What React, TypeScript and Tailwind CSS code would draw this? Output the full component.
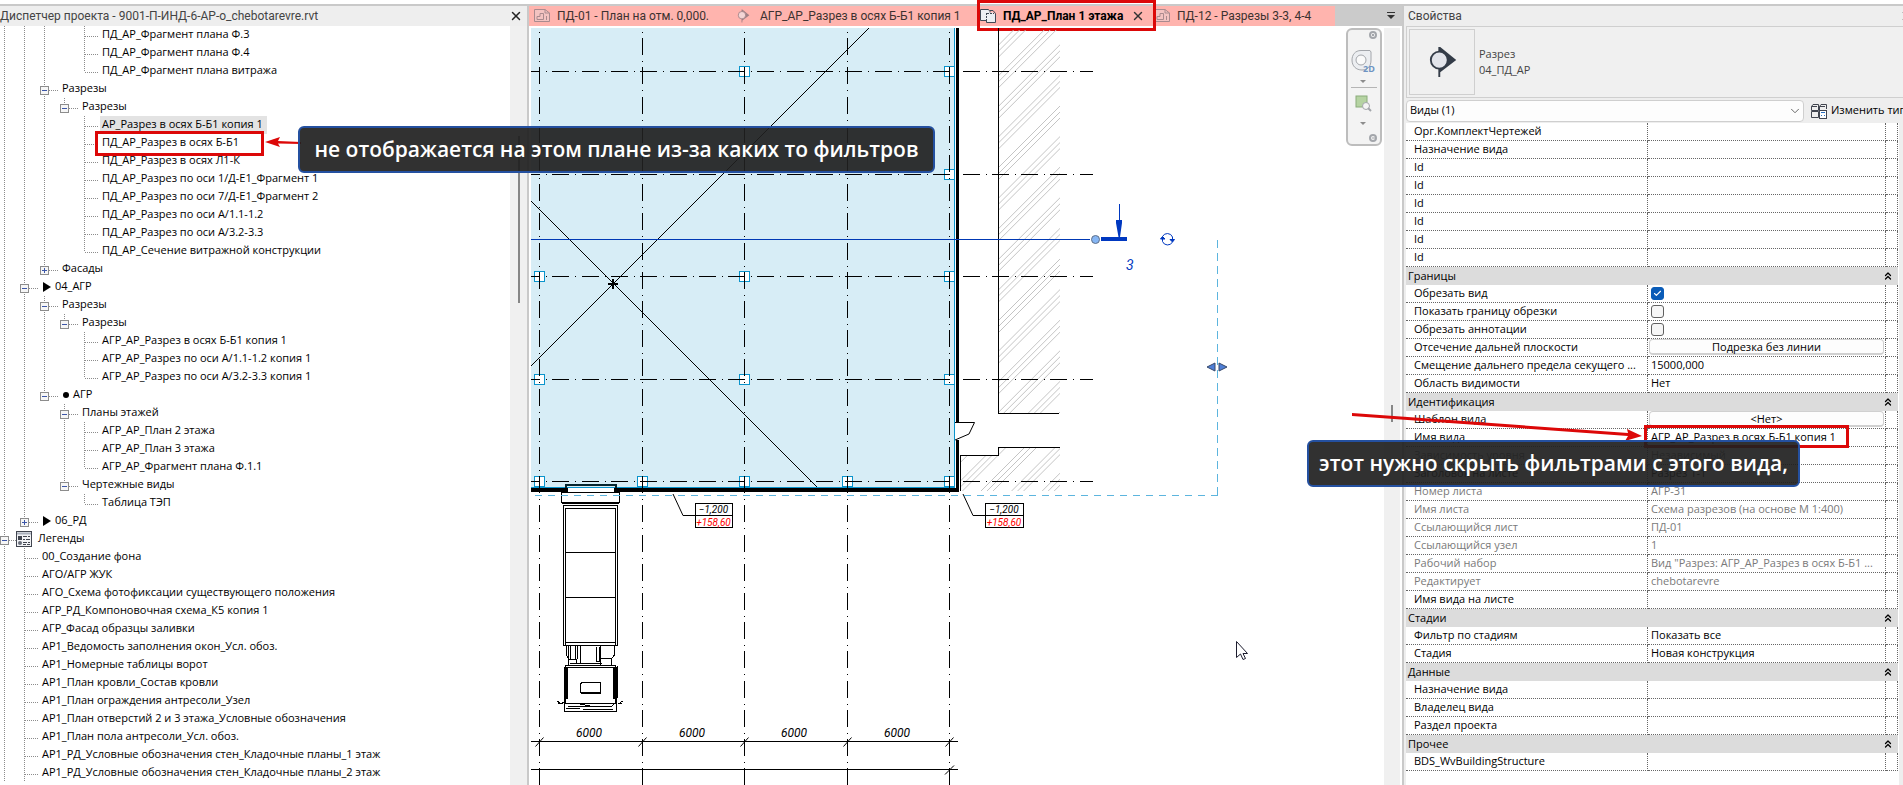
import React from 'react';
import { Check, ChevronDown, ChevronsUp, X } from 'lucide-react';

interface TreeRow {
  // one char per 20px column: | line, t tee, l corner, m/M minus box, P plus box (capital = last child)
  guides: string;
  text: string;
  mark?: 'triangle' | 'dot' | 'legend';
  selected?: boolean;
}

const treeRows: TreeRow[] = [
  { guides: '||| t', text: 'ПД_АР_Фрагмент плана Ф.3' },
  { guides: '||| t', text: 'ПД_АР_Фрагмент плана Ф.4' },
  { guides: '||| l', text: 'ПД_АР_Фрагмент плана витража' },
  { guides: '||m', text: 'Разрезы' },
  { guides: '|||M', text: 'Разрезы' },
  { guides: '||| t', text: 'АР_Разрез в осях Б-Б1 копия 1', selected: true },
  { guides: '||| t', text: 'ПД_АР_Разрез в осях Б-Б1' },
  { guides: '||| t', text: 'ПД_АР_Разрез в осях Л1-К' },
  { guides: '||| t', text: 'ПД_АР_Разрез по оси 1/Д-Е1_Фрагмент 1' },
  { guides: '||| t', text: 'ПД_АР_Разрез по оси 7/Д-Е1_Фрагмент 2' },
  { guides: '||| t', text: 'ПД_АР_Разрез по оси А/1.1-1.2' },
  { guides: '||| t', text: 'ПД_АР_Разрез по оси А/3.2-3.3' },
  { guides: '||| l', text: 'ПД_АР_Сечение витражной конструкции' },
  { guides: '||P', text: 'Фасады' },
  { guides: '|m', text: '04_АГР', mark: 'triangle' },
  { guides: '||m', text: 'Разрезы' },
  { guides: '|||M', text: 'Разрезы' },
  { guides: '||| t', text: 'АГР_АР_Разрез в осях Б-Б1 копия 1' },
  { guides: '||| t', text: 'АГР_АР_Разрез по оси А/1.1-1.2 копия 1' },
  { guides: '||| l', text: 'АГР_АР_Разрез по оси А/3.2-3.3 копия 1' },
  { guides: '||M', text: 'АГР', mark: 'dot' },
  { guides: '|| m', text: 'Планы этажей' },
  { guides: '|| |t', text: 'АГР_АР_План 2 этажа' },
  { guides: '|| |t', text: 'АГР_АР_План 3 этажа' },
  { guides: '|| |l', text: 'АГР_АР_Фрагмент плана Ф.1.1' },
  { guides: '|| M', text: 'Чертежные виды' },
  { guides: '||  l', text: 'Таблица ТЭП' },
  { guides: '|P', text: '06_РД', mark: 'triangle' },
  { guides: 'm', text: 'Легенды', mark: 'legend' },
  { guides: '|t', text: '00_Создание фона' },
  { guides: '|t', text: 'АГО/АГР ЖУК' },
  { guides: '|t', text: 'АГО_Схема фотофиксации существующего положения' },
  { guides: '|t', text: 'АГР_РД_Компоновочная схема_К5 копия 1' },
  { guides: '|t', text: 'АГР_Фасад образцы заливки' },
  { guides: '|t', text: 'АР1_Ведомость заполнения окон_Усл. обоз.' },
  { guides: '|t', text: 'АР1_Номерные таблицы ворот' },
  { guides: '|t', text: 'АР1_План кровли_Состав кровли' },
  { guides: '|t', text: 'АР1_План ограждения антресоли_Узел' },
  { guides: '|t', text: 'АР1_План отверстий 2 и 3 этажа_Условные обозначения' },
  { guides: '|t', text: 'АР1_План пола антресоли_Усл. обоз.' },
  { guides: '|t', text: 'АР1_РД_Условные обозначения стен_Кладочные планы_1 этаж' },
  { guides: '|t', text: 'АР1_РД_Условные обозначения стен_Кладочные планы_2 этаж' },
];

interface Prop {
  name: string;
  value?: string;
  kind?: 'group' | 'check' | 'button';
  checked?: boolean;
  muted?: boolean;
}

const props: Prop[] = [
  { name: 'Орг.КомплектЧертежей' },
  { name: 'Назначение вида' },
  { name: 'Id' },
  { name: 'Id' },
  { name: 'Id' },
  { name: 'Id' },
  { name: 'Id' },
  { name: 'Id' },
  { name: 'Границы', kind: 'group' },
  { name: 'Обрезать вид', kind: 'check', checked: true },
  { name: 'Показать границу обрезки', kind: 'check' },
  { name: 'Обрезать аннотации', kind: 'check' },
  { name: 'Отсечение дальней плоскости', kind: 'button', value: 'Подрезка без линии' },
  { name: 'Смещение дальнего предела секущего ...', value: '15000,000' },
  { name: 'Область видимости', value: 'Нет' },
  { name: 'Идентификация', kind: 'group' },
  { name: 'Шаблон вида', kind: 'button', value: '<Нет>' },
  { name: 'Имя вида', value: 'АГР_АР_Разрез в осях Б-Б1 копия 1' },
  { name: 'Зависимость уровня', value: 'Независимый', muted: true },
  { name: 'Заголовок на листе', value: 'Разрез 1-1' },
  { name: 'Номер листа', value: 'АГР-31', muted: true },
  { name: 'Имя листа', value: 'Схема разрезов (на основе М 1:400)', muted: true },
  { name: 'Ссылающийся лист', value: 'ПД-01', muted: true },
  { name: 'Ссылающийся узел', value: '1', muted: true },
  { name: 'Рабочий набор', value: 'Вид "Разрез: АГР_АР_Разрез в осях Б-Б1 ...', muted: true },
  { name: 'Редактирует', value: 'chebotarevre', muted: true },
  { name: 'Имя вида на листе' },
  { name: 'Стадии', kind: 'group' },
  { name: 'Фильтр по стадиям', value: 'Показать все' },
  { name: 'Стадия', value: 'Новая конструкция' },
  { name: 'Данные', kind: 'group' },
  { name: 'Назначение вида' },
  { name: 'Владелец вида' },
  { name: 'Раздел проекта' },
  { name: 'Прочее', kind: 'group' },
  { name: 'BDS_WvBuildingStructure' },
];

const Guide: React.FC<{ code: string }> = ({ code }) => {
  const box = 'mMP'.includes(code);
  const up = code !== ' ';
  const down = '|tm'.includes(code);
  const side = 'tlmMP'.includes(code);
  return (
    <svg className="h-[18px] w-5 shrink-0" viewBox="0 0 20 18" shapeRendering="crispEdges" aria-hidden="true">
      <g stroke="#8c8c8c" strokeDasharray="1 1">
        {up && <path d="M4.5 0V10" />}
        {down && <path d="M4.5 10V18" />}
        {side && <path d="M5 10.5H19" />}
      </g>
      {box && (
        <>
          <rect x="0.5" y="6.5" width="8" height="8" fill="#f6f6f6" stroke="#8c8c8c" />
          <path d={code === 'P' ? 'M2 10.5H7M4.5 8V13' : 'M2 10.5H7'} stroke="#3c56a8" />
        </>
      )}
    </svg>
  );
};

const LegendIcon = () => (
  <svg className="-ml-1 mr-0.5 h-4 w-4 shrink-0" viewBox="0 0 16 16" aria-hidden="true">
    <rect x="0.5" y="0.5" width="15" height="15" fill="#f2f3f6" stroke="#41454f" />
    <path d="M1 2.5H15" stroke="#aab0bc" strokeWidth="2" />
    <rect x="2" y="5" width="4" height="4" fill="#41454f" />
    <circle cx="4" cy="12" r="2" fill="#6a6f7a" />
    <path d="M7 5.5H11M12 5.5H14M7 8.5H9M10 8.5H14M7 11.5H11M12 11.5H14M7 13.5H10M11 13.5H14" stroke="#41454f" />
  </svg>
);

const SheetIcon = () => (
  <svg className="h-4 w-4 shrink-0" viewBox="0 0 16 16" fill="none" stroke="#a98a8e" aria-hidden="true">
    <path d="M0.5 1.5H11L15.5 5V13.5H0.5Z" fill="#f3c3c1" />
    <path d="M11 1.5V5H15.5M3 11.5V8.5H6V5.5H9.5V11.5H3M12.5 8V12" />
  </svg>
);

const PlanIcon = () => (
  <svg className="h-4 w-4 shrink-0" viewBox="0 0 16 16" fill="#eceef2" stroke="#3f4754" aria-hidden="true">
    <path d="M0.5 1.5H8.5L10 3.5V12.5H0.5Z" />
    <path d="M6.5 4.5H13L15.5 6.5V14.5H6.5Z" stroke="none" />
    <path d="M10 2.5H13L15.5 5.5V14.5H6.5V12" fill="none" />
    <path d="M6.5 5V12M7 5.5H14" strokeDasharray="2 1" />
  </svg>
);

const SectionIcon: React.FC<{ className: string; dark: string; light: string }> = ({ className, dark, light }) => (
  <svg className={className} viewBox="0 0 32 34" aria-hidden="true">
    <path d="M12 1L29 15L12 28V33H10V1Z" fill={dark} />
    <circle cx="11" cy="15" r="9" fill={light} stroke={dark} strokeWidth="2" />
  </svg>
);

const ProjectBrowser = () => (
  <aside className="flex w-[529px] shrink-0 flex-col border-r-2 border-[#c9c9c9]">
    <header className="flex h-5 items-center justify-between overflow-hidden bg-[#eeeeee] pr-1 font-[Roboto,sans-serif] text-[12px] text-[#444]">
      <h2 className="whitespace-nowrap">Диспетчер проекта - 9001-П-ИНД-6-АР-о_chebotarevre.rvt</h2>
      <button type="button" aria-label="Закрыть диспетчер">
        <X className="h-3.5 w-3.5 text-[#222]" strokeWidth={2.5} />
      </button>
    </header>
    <div className="flex flex-1">
      <ul className="flex-1">
        {treeRows.map((row, i) => (
          <li key={i} className="flex h-[18px] items-center whitespace-nowrap leading-4">
            {row.guides.split('').map((code, j) => (
              <Guide key={j} code={code} />
            ))}
            {row.mark === 'legend' && <LegendIcon />}
            {row.mark === 'triangle' && (
              <svg className="ml-[3px] h-3 w-2 shrink-0" viewBox="0 0 8 12" aria-hidden="true">
                <path d="M0 1L8 6L0 11Z" />
              </svg>
            )}
            {row.mark === 'dot' && <span className="ml-[3px] h-1.5 w-1.5 rounded-full bg-black" />}
            <span className={row.selected ? 'bg-[#e3e3e3] pb-0.5 pl-0.5 pr-1' : row.mark ? 'pb-0.5 pl-1' : 'pb-0.5 pl-0.5'}>{row.text}</span>
          </li>
        ))}
      </ul>
      <div className="flex w-[17px] justify-center bg-[#f0f0f0] pt-[110px]">
        <div className="h-[167px] w-0.5 bg-[#868686]" />
      </div>
    </div>
  </aside>
);

const gridX = [539.5, 642.5, 744.5, 847.5, 949.5];
const gridY = [71.5, 174.5, 276.5, 379.5, 481.5];
const columns = [
  [744.5, 71.5], [949.5, 71.5], [949.5, 174.5],
  [539.5, 276.5], [744.5, 276.5], [949.5, 276.5],
  [539.5, 379.5], [744.5, 379.5], [949.5, 379.5],
  [539.5, 481.5], [642.5, 481.5], [744.5, 481.5], [847.5, 481.5], [949.5, 481.5],
];
const hatch = Array.from({ length: 20 }, (_, k) => [0, 6, 12].map((d) => 1013 + k * 30.6 + d)).flat();

const LevelMark: React.FC<{ x: number; width: number }> = ({ x, width }) => (
  <g>
    <path d={`M${x - 22} 494L${x - 12} 515.5H${x}`} stroke="#000" fill="none" />
    <rect x={x + 0.5} y="503.5" width={width} height="24" fill="#fff" stroke="#000" shapeRendering="crispEdges" />
    <path d={`M${x} 515.5h${width}`} stroke="#000" shapeRendering="crispEdges" />
    <text x={x + width / 2} y="513" textAnchor="middle">−1,200</text>
    <text x={x + width / 2} y="526" textAnchor="middle" fill="#f00">+158,60</text>
  </g>
);

const Truck = () => (
  <g fill="none" stroke="#000" shapeRendering="crispEdges">
    <rect x="561.5" y="492.5" width="58" height="10" fill="#fff" />
    <path d="M562 503.5H619" />
    <path d="M563.5 645V505.5H617.5V645Z" fill="#fff" />
    <path d="M565.5 645V508.5H615.5V645M565 552.5H616M565 597.5H616M565 642.5H616" />
    <path d="M566.5 646V655L569 659M614.5 646V655L612 658M568.5 646V665M570.5 646V659M575.5 646V659M577.5 646V659M580.5 646V664M596.5 647V661M599.5 647V661M600.5 646V665M596 661.5H600M601 658.5H611.5V665M569 659.5H576V663.5H570M568 665.5H612M577 663.5H602" />
    <rect x="565.5" y="665.5" width="50" height="38" />
    <path d="M567 667.5H615" />
    <path d="M565.5 667V699M615 667V699" strokeWidth="4" />
    <path d="M617.5 666V698" />
    <path d="M580.5 693V684L582 682.5H600.5V692" />
    <path d="M581 693H601" strokeWidth="2" />
    <path d="M568 703.5H577L590 706H612L614 703.5M564.5 698V711.5H616.5V698M566 708.5H580M568 706.5H612M583 709.5H613" />
    <path d="M557 701L561 704L564 702M623 701L618 704M557.5 703H563M618 703.5H622" />
  </g>
);

const FloorPlan = () => (
  <svg className="min-h-[700px] w-full flex-1" role="img" aria-label="План 1 этажа">
    <defs>
      <clipPath id="hatchArea">
        <path d="M999 30H1060V413H999ZM961 455H999V448H1060V491H961Z" />
      </clipPath>
    </defs>
    <g transform="translate(-531 -28)" fontFamily="Roboto, sans-serif" fontStyle="italic" fontSize="10">
      <rect x="531" y="28" width="424" height="460" fill="#d7edf6" />
      <g clipPath="url(#hatchArea)" stroke="#c4c4c4">
        {hatch.map((c) => (
          <path key={c} d={`M${c - 600} 600L${c} 0`} />
        ))}
      </g>

      {/* Floor diagonals */}
      <path d="M869 28L531 366M531 201L817 487" stroke="#000" />

      {/* Columns */}
      <g fill="#fff" stroke="#0a94cc" shapeRendering="crispEdges">
        {columns.map(([x, y]) => (
          <rect key={`${x}-${y}`} x={x - 5} y={y - 5} width="10" height="10" />
        ))}
      </g>

      {/* Walls */}
      <g shapeRendering="crispEdges">
        <path d="M954.5 28V488M531 487.5H955" stroke="#0a94cc" />
        <path d="M956 28H959V422H956ZM956 440H959V492H956ZM531 488H568V492H531ZM614 488H959V492H614Z" />
        <path d="M568 488H614V492H568Z" fill="#fff" />
        <path d="M566 488V485H616V488" fill="none" stroke="#06262e" strokeWidth="2" />
        <path d="M998.5 28V413.5H1059M960.5 491V455.5H998.5V447.5H1060" fill="none" stroke="#000" />
      </g>
      <path d="M955 422.5H974.5L969 434L955 440" fill="#fff" stroke="#000" />

      {/* Grid axes */}
      <g stroke="#000" shapeRendering="crispEdges">
        {gridX.map((x) => (
          <path key={x} d={`M${x} 28V785`} strokeDasharray="17 6 1 5.2" strokeDashoffset="19" />
        ))}
        {gridY.map((y) => (
          <path key={y} d={`M531 ${y}H1093`} strokeDasharray="17 6 1 5.3" strokeDashoffset="8" />
        ))}
        <path d="M531 741.5H958M531 769.5H958" />
      </g>
      <path d="M608 284H618M613 279V289" stroke="#000" strokeWidth="2" />

      {/* Dimensions */}
      <g stroke="#000">
        {gridX.map((x) => (
          <path key={x} d={`M${x - 4} 746.5L${x + 4} 737.5`} />
        ))}
        <path d="M945 774.5L954 765.5" />
      </g>
      <g textAnchor="middle" fontSize="12">
        <text x="589" y="737">6000</text>
        <text x="692" y="737">6000</text>
        <text x="794" y="737">6000</text>
        <text x="897" y="737">6000</text>
      </g>

      <Truck />
      <LevelMark x={695} width={37} />
      <LevelMark x={985} width={38} />

      {/* Section crop region */}
      <path d="M1217.5 240V495.5" stroke="#5cb5de" strokeDasharray="8 5" shapeRendering="crispEdges" />
      <path d="M1217.5 495.5H531" stroke="#5cb5de" strokeDasharray="7 6" shapeRendering="crispEdges" />
      <path d="M1215 363L1207 367L1215 371ZM1219 363L1227 367L1219 371Z" fill="#4f7fd6" stroke="#384a6b" />

      {/* Section mark */}
      <g fill="#0038c0">
        <path d="M531 239.5H1090" stroke="#0038b4" shapeRendering="crispEdges" />
        <path d="M1101 237H1127V241H1101Z" />
        <path d="M1119 204H1120V220H1122V223L1120 237H1118.5L1116 223V220H1119Z" />
        <circle cx="1095.5" cy="239.5" r="4" fill="#86b6f4" stroke="#5f6f88" />
        <text x="1126" y="270" fontSize="14">3</text>
      </g>
      <g fill="none" stroke="#0038c0">
        <path d="M1162.5 236.5A5.5 5.5 0 0 1 1172.5 237V241M1172.5 242A5.5 5.5 0 0 1 1162.5 241.5V238" />
        <path d="M1160.5 239L1162.5 236.5L1165 239ZM1170 239.5L1172.5 242L1174.5 239.5Z" fill="#0038c0" />
      </g>

      <path d="M1236.5 641.5V657.5L1240.5 654L1243 659.5L1245.5 658.5L1243 653.5H1247.5Z" fill="#fff" stroke="#1c1c2e" />
    </g>
  </svg>
);

const NavigationBar = () => (
  <div className="absolute right-0.5 top-0 flex h-[118px] w-9 flex-col items-center rounded-md border-2 border-[#bdbdbd] bg-[#f3f3f3]">
    <svg className="h-full w-full" viewBox="0 0 32 114" fill="none" stroke="#a3a6ab" aria-hidden="true">
      <circle cx="25" cy="5" r="3" strokeWidth="2" />
      <path d="M24 4L26 6M26 4L24 6" />
      <path d="M22 20.5H13C7 20.5 4 25 4 30C4 36 8 40 14 40C20 40 23 36 23 30V22Z" fill="#eceef1" />
      <circle cx="13" cy="30" r="5" fill="#fafafa" />
      <text x="15" y="42" fontSize="9" fontWeight="700" fill="#6f94c2" stroke="none">2D</text>
      <path d="M12 50H18L15 53Z" fill="#8c8c8c" stroke="none" />
      <path d="M3 57.5H29" stroke="#b5b5b5" />
      <rect x="8" y="66" width="11" height="11" fill="#b5d3a2" stroke="#8aab7b" />
      <circle cx="18" cy="76" r="3.5" fill="#f5f5f5" />
      <path d="M20 78L23 81" strokeWidth="2" />
      <path d="M12 92H18L15 95Z" fill="#8c8c8c" stroke="none" />
      <circle cx="25" cy="108" r="3" strokeWidth="2" />
      <path d="M24 108H27" />
    </svg>
  </div>
);

const Workspace = () => (
  <main className="flex min-w-0 flex-1 flex-col">
    <nav className="flex h-5 items-center bg-[#cbcbcb] font-[Roboto,sans-serif] text-[12px] text-[#3c3230]">
      <div className="flex h-5 w-full max-w-[806px] items-center whitespace-nowrap bg-[#ffb4ae]">
        <button type="button" className="flex h-5 w-[203px] shrink-0 items-center gap-[7px] pl-[5px]">
          <SheetIcon />
          ПД-01 - План на отм. 0,000.
        </button>
        <button type="button" className="flex h-5 w-[245px] shrink-0 items-center gap-[9px] pl-[5px]">
          <SectionIcon className="h-3.5 w-3.5 shrink-0" dark="#a07f84" light="#f3d5d5" />
          АГР_АР_Разрез в осях Б-Б1 копия 1
        </button>
        <div className="relative flex h-5 w-[177px] shrink-0 items-center justify-between pl-[3px] pr-[9px] text-black">
          <button type="button" className="flex items-center gap-[7px] font-bold">
            <PlanIcon />
            ПД_АР_План 1 этажа
          </button>
          <button type="button" aria-label="Закрыть вид">
            <X className="h-3.5 w-3.5 text-[#333]" strokeWidth={2.5} />
          </button>
          <div className="pointer-events-none absolute -bottom-[5px] -top-1.5 left-0 -right-0.5 border-[3px] border-[#dc0808]" />
        </div>
        <button type="button" className="flex h-5 items-center gap-[7px]">
          <SheetIcon />
          ПД-12 - Разрезы 3-3, 4-4
        </button>
      </div>
      <button type="button" className="ml-auto pr-1.5" aria-label="Список видов">
        <svg className="h-2 w-2.5" viewBox="0 0 10 8">
          <path d="M1 0H9V1H1ZM1 3H9L5 7Z" fill="#333" />
        </svg>
      </button>
    </nav>
    <div className="flex flex-1 px-0.5 pt-0.5">
      <div className="relative flex min-w-0 flex-1 flex-col">
        <FloorPlan />
        <NavigationBar />
      </div>
      <div className="flex w-4 justify-center bg-[#f0f0f0] pt-[377px]">
        <div className="h-[17px] w-0.5 bg-[#868686]" />
      </div>
    </div>
  </main>
);

const PropertyValue: React.FC<{ prop: Prop; id: string }> = ({ prop, id }) => {
  if (prop.kind === 'check') {
    return (
      <span className="relative mt-0.5 block h-[13px] w-[13px]">
        <input
          id={id}
          type="checkbox"
          defaultChecked={prop.checked}
          className="block h-[13px] w-[13px] appearance-none rounded-[3px] border border-[#606060] bg-[#f6f6f6] checked:border-[#0a5cb8] checked:bg-[#0a5cb8]"
        />
        {prop.checked && <Check className="pointer-events-none absolute left-0.5 top-0.5 h-[9px] w-[9px] text-white" strokeWidth={3} />}
      </span>
    );
  }
  if (prop.kind === 'button') {
    return (
      <button id={id} type="button" className="-ml-0.5 block h-4 w-[235px] rounded border border-b-2 border-[#d0d0d0] bg-[#fdfdfd] leading-[14px]">
        {prop.value}
      </button>
    );
  }
  return <>{prop.value}</>;
};

const cell = 'h-[18px] border-b border-r border-dotted border-[#666] p-0 text-left align-top font-normal leading-[15px]';

const Properties = () => (
  <aside className="w-[501px] shrink-0 overflow-hidden border-l-2 border-[#c9c9c9] bg-[#eeeeee] pl-0.5">
    <header className="flex h-5 w-[506px] items-center justify-between pl-0.5 font-[Roboto,sans-serif] text-[12px] text-[#444]">
      <h2>Свойства</h2>
      <button type="button" aria-label="Закрыть свойства">
        <X className="h-3 w-3" />
      </button>
    </header>
    <div className="flex h-[72px] w-[520px] items-center border border-[#cfcfcf] bg-[#f0f0f0] pl-0.5 text-[#444]">
      <div className="flex h-[66px] w-[66px] items-center justify-center border border-[#cfcfcf]">
        <SectionIcon className="-mr-1 h-8 w-8" dark="#343c48" light="#e2e4ea" />
      </div>
      <p className="pl-1 leading-4">
        Разрез
        <br />
        04_ПД_АР
      </p>
    </div>
    <div className="flex h-[25px] w-[560px] items-center">
      <div className="relative">
        <select aria-label="Категория" className="block h-[22px] w-[398px] appearance-none rounded-sm border border-[#cfcfcf] bg-[#fdfdfd] pl-[3px]">
          <option>Виды (1)</option>
        </select>
        <ChevronDown className="pointer-events-none absolute right-0.5 top-1 h-3.5 w-3.5 text-[#555]" strokeWidth={1.5} />
      </div>
      <button type="button" className="ml-[7px] flex items-center gap-1 whitespace-nowrap">
        <svg className="h-4 w-4" viewBox="0 0 16 16" fill="none" stroke="#41454f" aria-hidden="true">
          <path d="M0.5 3.5L2 1.5H7.5V7.5H0.5ZM8.5 3.5L10 1.5H15.5V6M8.5 3.5V7.5M0.5 8.5H7.5V14.5H0.5ZM0.5 3.5H6M8.5 3.5H14" />
          <rect x="8.5" y="7.5" width="7" height="8" fill="#fff" />
          <path d="M10 9.5H14M10 12.5H11M13 12.5H14" stroke="#2a6fc0" />
        </svg>
        Изменить тип
      </button>
    </div>
    <div className="min-h-[668px] w-[493px] bg-white">
      <table className="w-[492px] table-fixed border-separate border-spacing-0 whitespace-nowrap">
        <colgroup>
          <col className="w-[242px]" />
          <col className="w-[238px]" />
          <col className="w-3" />
        </colgroup>
        <tbody>
          {props.map((prop, i) =>
            prop.kind === 'group' ? (
              <tr key={i}>
                <th colSpan={3} scope="colgroup" className="h-[18px] bg-[#dcdcdc] p-0 text-left font-normal leading-[18px]">
                  <div className="flex items-center justify-between pl-0.5 pr-1">
                    {prop.name}
                    <ChevronsUp className="h-3 w-3" strokeWidth={2.5} />
                  </div>
                </th>
              </tr>
            ) : (
              <tr key={i} className={prop.muted ? 'text-[#7a7a7a]' : 'text-black'}>
                <th scope="row" className={`${cell} pl-2`}>
                  <label htmlFor={prop.kind ? `prop-${i}` : undefined}>{prop.name}</label>
                </th>
                <td className={`${cell} pl-[3px]`}>
                  <PropertyValue prop={prop} id={`prop-${i}`} />
                </td>
                <td className={cell} />
              </tr>
            ),
          )}
        </tbody>
      </table>
    </div>
  </aside>
);

const callout =
  'absolute flex h-[47px] items-center justify-center whitespace-nowrap rounded-md border-2 border-[#2450a0] bg-[#202020]/92 text-[21px] font-semibold text-white';

const App: React.FC = () => {
  return (
    <div className="relative flex min-h-screen flex-col overflow-hidden bg-white pt-1 font-['Open_Sans','Noto_Sans',sans-serif] text-[11px] text-black">
      <div className="flex flex-1 border-t-2 border-[#c9c9c9]">
        <ProjectBrowser />
        <Workspace />
        <Properties />
      </div>

      {/* Notes on the project browser */}
      <div className="pointer-events-none absolute left-[95px] top-[131px] h-[25px] w-[169px] border-[3px] border-[#dc0808]" />
      <svg className="pointer-events-none absolute left-[265px] top-[136px] h-3 w-9" viewBox="0 0 36 12" fill="#dc0808">
        <path d="M0 6L15 1L13 5L36 6V8L13 7.5L15 11Z" />
      </svg>
      <div className={`${callout} left-[298px] top-[126px] w-[637px]`}>не отображается на этом плане из-за каких то фильтров</div>

      {/* Notes on the properties */}
      <div className="pointer-events-none absolute right-[54px] top-[425px] h-[23px] w-[205px] border-[3px] border-[#dc0808]" />
      <svg className="pointer-events-none absolute right-[261px] top-[412px] h-8 w-[290px]" viewBox="0 0 290 32" fill="#dc0808">
        <path d="M0 1L276 21L275 17L290 24L273 29L276 24L0 4Z" />
      </svg>
      <div className={`${callout} right-[103px] top-[440px] w-[493px]`}>этот нужно скрыть фильтрами с этого вида,</div>
    </div>
  );
};

export default App;
